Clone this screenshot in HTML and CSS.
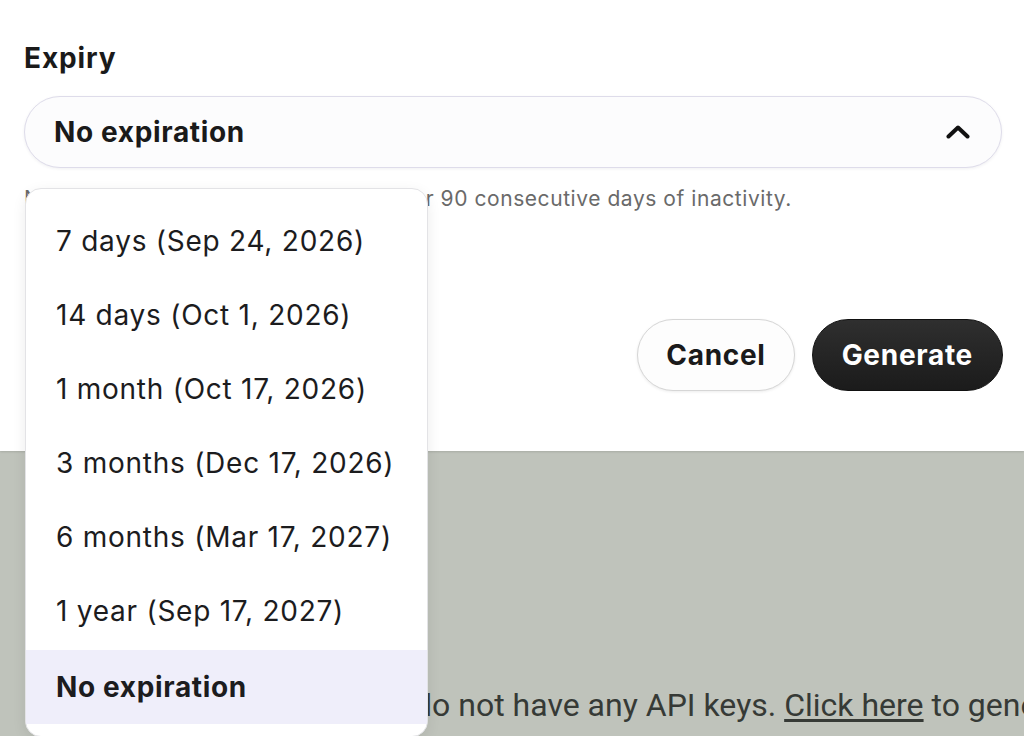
FILE: index.html
```html
<!DOCTYPE html>
<html>
<head>
<meta charset="utf-8">
<link rel="stylesheet" href="styles.css">
</head>
<body>
<div class="page">
  <section class="modal">
    <div class="label">Expiry</div>
    <div class="select">
      <span class="select-value">No expiration</span>
      <svg class="chevron" width="24" height="14" viewBox="0 0 24 14"><polyline points="2.5,11.5 12,2.5 21.5,11.5" fill="none" stroke="#111" stroke-width="4" stroke-linecap="round" stroke-linejoin="round"/></svg>
    </div>
    <p class="helper">Non-expiring keys will be revoked after 90 consecutive days of inactivity.</p>
    <div class="actions">
      <button class="btn btn-cancel">Cancel</button>
      <button class="btn btn-primary">Generate</button>
    </div>
  </section>
  <section class="backdrop">
    <p class="empty">You do not have any API keys. <a href="#">Click here</a> to generate one.</p>
  </section>
  <ul class="menu">
    <li class="item">7 days (Sep 24, 2026)</li>
    <li class="item">14 days (Oct 1, 2026)</li>
    <li class="item">1 month (Oct 17, 2026)</li>
    <li class="item">3 months (Dec 17, 2026)</li>
    <li class="item">6 months (Mar 17, 2027)</li>
    <li class="item">1 year (Sep 17, 2027)</li>
    <li class="item selected">No expiration</li>
  </ul>
</div>
</body>
</html>
```
FILE: styles.css
```css
html, body {
  margin: 0;
  padding: 0;
  height: 100%;
  overflow: hidden;
}
body {
  font-family: Inter, "Noto Sans", sans-serif;
  color: #1c1c1e;
  background: #bfc3bb;
}
.page {
  position: relative;
  height: 736px;
  display: flex;
  flex-direction: column;
}
.modal {
  background: #ffffff;
  padding: 38px 21px 60px 24px;
  box-shadow: 0 1px 2px rgba(0,0,0,0.12);
  position: relative;
  z-index: 1;
}
.label {
  font-size: 28px;
  line-height: 40px;
  font-weight: 700;
  color: #1a1a1a;
  letter-spacing: 0.9px;
}
.select {
  margin: 18px 1px 0 0;
  height: 72px;
  box-sizing: border-box;
  border: 1.5px solid #dedcea;
  border-radius: 36px;
  background: #fcfcfd;
  box-shadow: 0 1px 3px rgba(60,60,90,0.08);
  display: flex;
  align-items: center;
  justify-content: space-between;
  padding: 0 31px 0 29px;
}
.select-value {
  font-size: 28px;
  font-weight: 700;
  color: #1a1a1a;
  letter-spacing: 0.65px;
}
.chevron {
  display: block;
}
.helper {
  margin: 17px 0 0 0;
  font-size: 21px;
  line-height: 28px;
  color: #6a6a6a;
  letter-spacing: 0.56px;
  white-space: nowrap;
}
.actions {
  margin-top: 106px;
  display: flex;
  justify-content: flex-end;
  gap: 17px;
}
.btn {
  height: 72px;
  border-radius: 36px;
  padding: 0 29px;
  font-family: Inter, "Noto Sans", sans-serif;
  font-size: 28px;
  font-weight: 700;
  letter-spacing: 0.7px;
  cursor: pointer;
}
.btn-cancel {
  background: #fdfdfd;
  color: #1a1a1a;
  border: 1.5px solid #d6d6d6;
  box-shadow: 0 1px 3px rgba(0,0,0,0.08);
  padding: 0 28px;
}
.btn-primary {
  background: linear-gradient(#2f2f2f, #1b1b1b);
  color: #ffffff;
  border: 1px solid #111;
}
.backdrop {
  flex: 1;
  background: #bfc3bb;
  padding: 233px 0 0 352px;
  overflow: hidden;
}
.empty {
  margin: 0;
  font-family: Roboto, "Liberation Sans", sans-serif;
  font-size: 32px;
  line-height: 42px;
  color: #363a36;
  white-space: nowrap;
}
.empty a {
  color: #363a36;
  text-decoration: underline;
  text-underline-offset: 3px;
}
.menu {
  position: absolute;
  left: 25px;
  top: 188px;
  width: 403px;
  box-sizing: border-box;
  margin: 0;
  padding: 15px 0 12px 0;
  list-style: none;
  background: #ffffff;
  border: 1px solid #e3e3e6;
  border-radius: 16px;
  box-shadow: 0 4px 14px rgba(0,0,0,0.08);
  z-index: 5;
}
.item {
  height: 74px;
  display: flex;
  align-items: center;
  padding-left: 30px;
  font-size: 28px;
  letter-spacing: 0.75px;
  color: #1c1c1e;
}
.item.selected {
  background: #efeefa;
  font-weight: 700;
  letter-spacing: 0.65px;
  margin-top: 2px;
}
```
